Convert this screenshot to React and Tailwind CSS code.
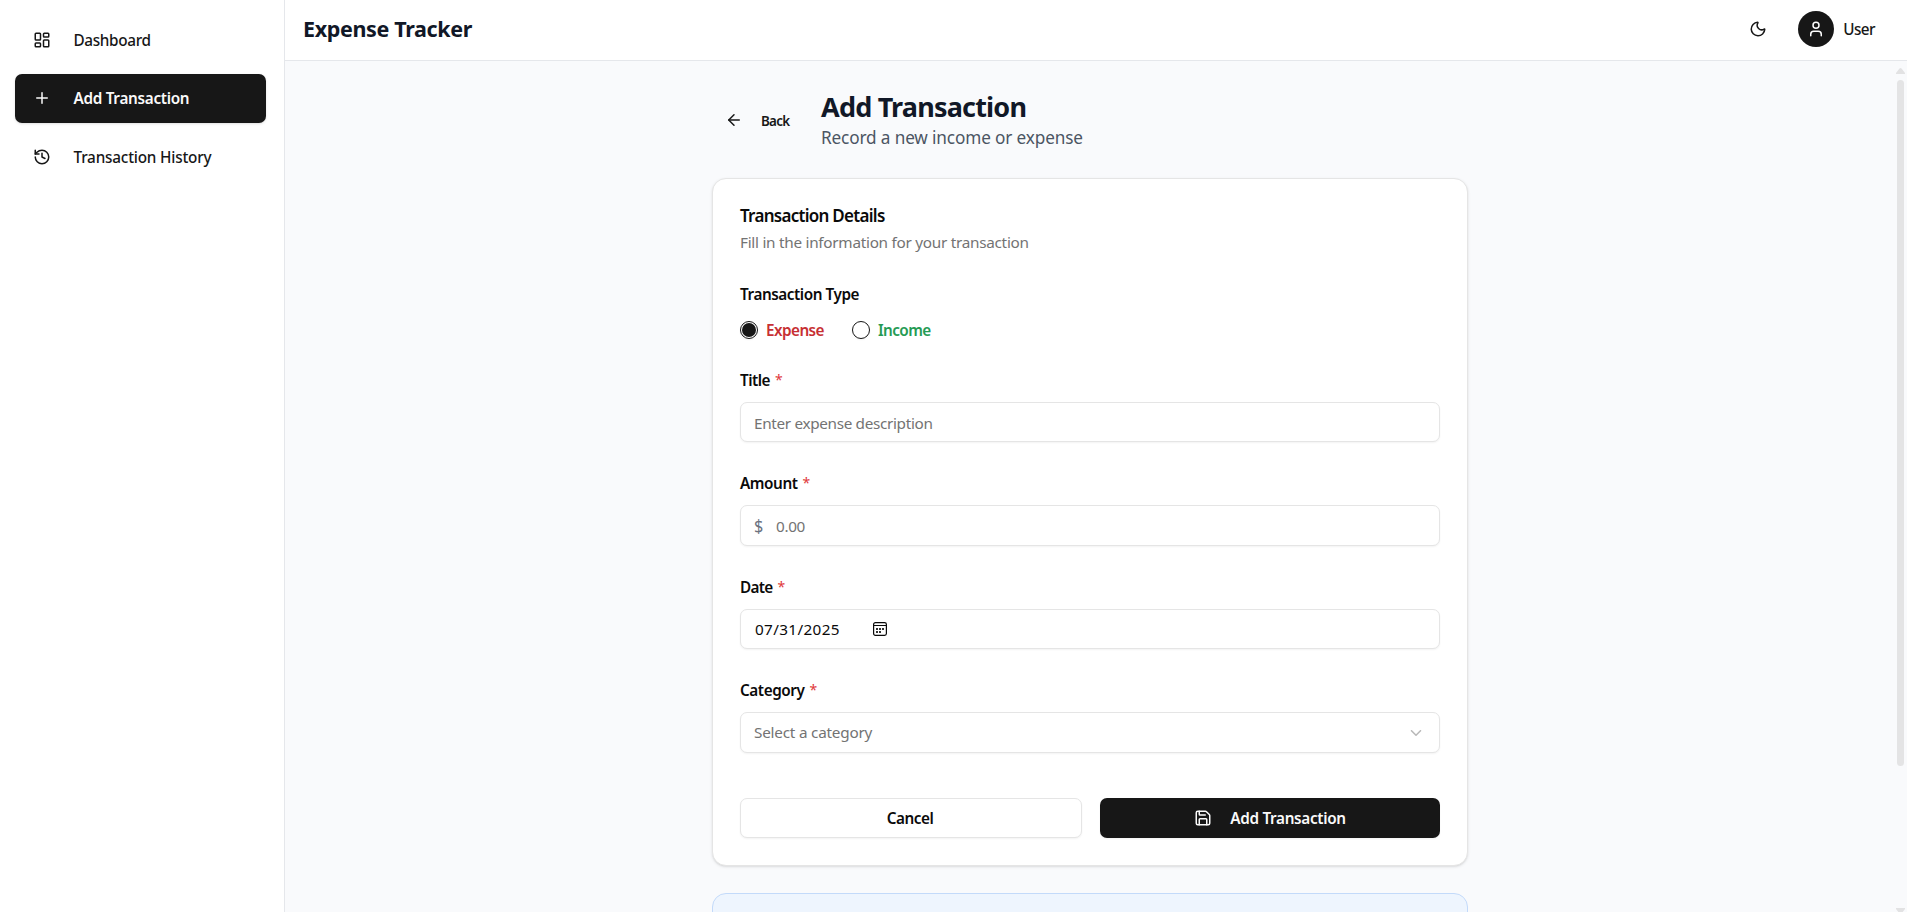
import React from "react";
import {
  LayoutDashboard,
  Plus,
  History,
  Moon,
  User,
  ArrowLeft,
  ChevronDown,
  Save,
} from "lucide-react";

function NavItem({ icon: Icon, active, children }) {
  return (
    <a
      className={
        "flex h-[49px] items-center rounded-[7px] pl-[18px] " +
        (active ? "bg-[#171717] font-semibold text-[#fafafa] shadow-sm" : "font-medium text-[#171717]")
      }
    >
      <Icon className="size-[18px]" strokeWidth={2} />
      <span className="ml-[22.5px]">{children}</span>
    </a>
  );
}

function Field({ label, tracking, children }) {
  return (
    <div className="mb-[31px]">
      <label className="mb-[12px] flex h-[20px] items-center font-semibold text-[#0a0a0a]">
        <span className={tracking}>{label}</span>
        <span className="ml-[5px] text-[14px] font-normal text-[#e0383b]">*</span>
      </label>
      {children}
    </div>
  );
}

function RadioDot({ checked }) {
  return (
    <span className="flex size-[18px] items-center justify-center rounded-full border border-[#171717] bg-white shadow-xs">
      {checked && <span className="size-[14px] rounded-full bg-[#171717]" />}
    </span>
  );
}

function CalendarIcon() {
  return (
    <svg className="ml-[33px] size-[14px]" viewBox="0 0 14 14" fill="none">
      <rect x="0.6" y="0.6" width="12.8" height="12.8" rx="1.8" stroke="#0a0a0a" strokeWidth="1.2" />
      <path d="M1 3.5h12" stroke="#0a0a0a" />
      <path d="M3 6h2v2H3zM6 6h2v2H6zM9 6h2v2H9zM3 9h2v2H3zM6 9h2v2H6z" fill="#333" />
    </svg>
  );
}

const box = "flex items-center rounded-[7px] border border-[#e5e5e5] bg-white pl-[13px] shadow-xs ";

export default function App() {
  return (
    <div className="flex h-[912px] w-full overflow-hidden bg-white font-['Noto_Sans',sans-serif] text-[15.3px] leading-[20px]">
      <aside className="w-[285px] shrink-0 border-r border-[#e5e7eb] bg-white pr-[18px] pl-[15px] pt-[15px]">
        <nav className="flex flex-col gap-[9.5px]">
          <NavItem icon={LayoutDashboard}>
            <span className="tracking-[-0.34px]">Dashboard</span>
          </NavItem>
          <NavItem icon={Plus} active>
            <span className="tracking-[-0.3px]">Add Transaction</span>
          </NavItem>
          <NavItem icon={History}>
            <span className="tracking-[-0.2px]">Transaction History</span>
          </NavItem>
        </nav>
      </aside>

      <div className="flex min-w-0 flex-1 flex-col">
        <header className="flex h-[61px] shrink-0 items-center border-b border-[#e5e7eb] bg-white pb-[2px] pl-[18px] pr-[32px]">
          <h1 className="flex-1 text-[21.5px] leading-[28px] font-bold tracking-[-0.35px] text-[#111827]">
            Expense Tracker
          </h1>
          <Moon className="size-[18px] text-[#171717]" />
          <span className="ml-[31px] flex size-[36px] items-center justify-center rounded-full bg-[#171717] text-white">
            <User className="size-[18px]" />
          </span>
          <span className="ml-[9px] pb-px font-medium tracking-[-0.55px] text-[#171717]">User</span>
        </header>

        <div className="flex min-h-0 flex-1 overflow-hidden bg-[#f9fafc]">
          <main className="flex flex-1 flex-col pl-[427px]">
            <div className="flex h-[117px] w-[756px] shrink-0">
              <div className="flex h-[20px] w-[109px] translate-y-[49px] items-center pl-[13px] text-[#171717]">
                <ArrowLeft className="size-[18px]" />
                <span className="ml-[18px] pt-px text-[13.4px] font-semibold tracking-[-0.7px]">Back</span>
              </div>
              <div className="pt-[29px]">
                <h2 className="text-[27px] leading-[33px] font-bold tracking-[-0.8px] text-[#111827]">
                  Add Transaction
                </h2>
                <p className="pt-[3px] text-[17.2px] leading-[24px] tracking-[-0.14px] text-[#4b5563]">
                  Record a new income or expense
                </p>
              </div>
            </div>

            <section className="h-[688px] w-[756px] shrink-0 rounded-[14px] border border-[#e5e5e5] bg-white px-[27px] pt-[26px] shadow-sm">
              <h3 className="text-[17px] leading-[22px] font-semibold tracking-[-0.72px] text-[#0a0a0a]">
                Transaction Details
              </h3>
              <p className="mt-[5px] tracking-[-0.27px] text-[#737373]">
                Fill in the information for your transaction
              </p>
              <div className="mt-[32px] font-semibold tracking-[-0.44px] text-[#0a0a0a]">Transaction Type</div>
              <div className="mt-[16px] mb-[30px] flex h-[20px] items-center font-semibold">
                <div className="flex w-[112px] items-center gap-[8px] tracking-[-0.56px] text-[#c73033]">
                  <RadioDot checked />
                  Expense
                </div>
                <div className="flex items-center gap-[8px] tracking-[-0.6px] text-[#259b54]">
                  <RadioDot />
                  Income
                </div>
              </div>

              <Field label="Title" tracking="tracking-[-0.5px]">
                <div className={box + "h-[40px] pt-[2px] tracking-[-0.33px] text-[#737373]"}>
                  Enter expense description
                </div>
              </Field>
              <Field label="Amount" tracking="tracking-[-0.44px]">
                <div className={box + "h-[41px] text-[#737373]"}>
                  <span className="w-[22px] text-[18px] text-[#6b7280]">
                    <span className="inline-block origin-left scale-x-90">$</span>
                  </span>
                  <span className="tracking-[-0.34px]">0.00</span>
                </div>
              </Field>
              <Field label="Date" tracking="tracking-[-0.7px]">
                <div className={box + "h-[40px] text-[#0a0a0a]"}>
                  <span className="ml-px tracking-[0.35px]">07/31/2025</span>
                  <CalendarIcon />
                </div>
              </Field>
              <Field label="Category" tracking="tracking-[-0.43px]">
                <div className={box + "h-[41px] justify-between pr-[14px] text-[#737373]"}>
                  <span className="pb-px tracking-[-0.22px]">Select a category</span>
                  <ChevronDown className="size-[18px] opacity-50" />
                </div>
              </Field>

              <div className="mt-[45px] flex gap-[18px] font-semibold">
                <button className="h-[40px] w-[342px] rounded-[7px] border border-[#e5e5e5] bg-white pr-[2px] tracking-[-0.48px] text-[#0a0a0a] shadow-xs">
                  Cancel
                </button>
                <button className="flex h-[40px] w-[340px] items-center justify-center rounded-[7px] bg-[#171717] text-[#fafafa] shadow-xs">
                  <Save className="size-[18px]" />
                  <span className="ml-[18px] tracking-[-0.32px]">Add Transaction</span>
                </button>
              </div>
            </section>

            <section className="mt-[27px] h-[120px] w-[756px] shrink-0 rounded-[14px] border border-[#c3dafa] bg-[#eef5fe]" />
          </main>

          <div className="flex w-[11px] flex-col items-center pt-[7px] pr-[2px]">
            <svg className="h-[6px] w-[9px] shrink-0" viewBox="0 0 9 6">
              <path d="M3.5.5Q4.5-.4 5.5.5L9 5v1H0V5Z" fill="#e2e2e3" />
            </svg>
            <div className="mt-[6px] h-[686px] w-[7px] shrink-0 rounded-full bg-[#e4e4e5]" />
            <svg className="mt-[142px] h-[6px] w-[9px] shrink-0" viewBox="0 0 9 6">
              <path d="M0 0h9v1L5.500 5.500Q4.500 6.400 3.500 5.500L0 1Z" fill="#e2e2e3" />
            </svg>
          </div>
        </div>
      </div>
    </div>
  );
}
